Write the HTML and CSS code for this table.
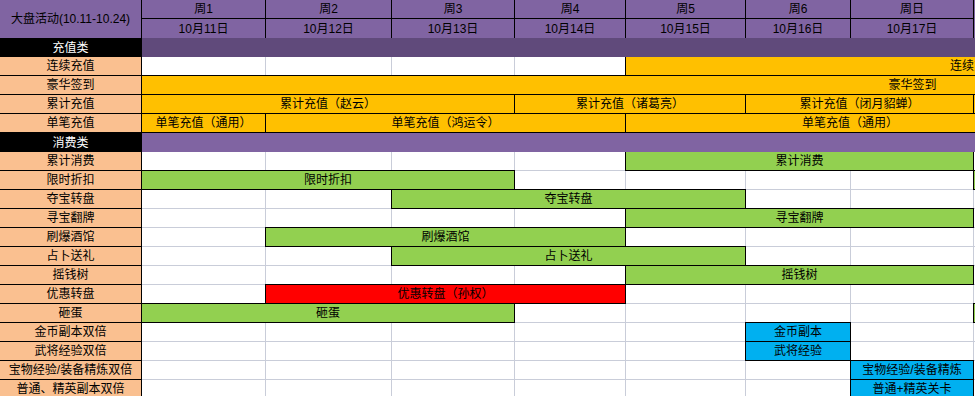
FILE: index.html
```html
<!DOCTYPE html>
<html lang="zh-CN">
<head>
<meta charset="utf-8">
<title>大盘活动</title>
<link rel="stylesheet" href="styles.css">
</head>
<body>
<div class="sheet">
  <!-- header -->
  <div class="corner">大盘活动(10.11-10.24)</div>
  <div class="hd top">周1</div>
  <div class="hd top">周2</div>
  <div class="hd top">周3</div>
  <div class="hd top">周4</div>
  <div class="hd top">周5</div>
  <div class="hd top">周6</div>
  <div class="hd top">周日</div>
  <div class="hd-rest"></div>
  <div class="hd">10月11日</div>
  <div class="hd">10月12日</div>
  <div class="hd">10月13日</div>
  <div class="hd">10月14日</div>
  <div class="hd">10月15日</div>
  <div class="hd">10月16日</div>
  <div class="hd">10月17日</div>

  <!-- 充值类 -->
  <div class="cat">充值类</div>
  <div class="cat-bar dark"></div>

  <div class="lbl">连续充值</div>
  <div class="c"></div><div class="c"></div><div class="c"></div><div class="c"></div>
  <div class="bar orange flush s6">连续充值</div>
  <div class="c"></div>

  <div class="lbl">豪华签到</div>
  <div class="bar orange s11">豪华签到</div>

  <div class="lbl">累计充值</div>
  <div class="bar orange s3">累计充值（赵云）</div>
  <div class="bar orange s2">累计充值（诸葛亮）</div>
  <div class="bar orange s2">累计充值（闭月貂蝉）</div>
  <div class="bar orange s4"></div>

  <div class="lbl">单笔充值</div>
  <div class="bar orange s1">单笔充值（通用）</div>
  <div class="bar orange s3">单笔充值（鸿运令）</div>
  <div class="bar orange s4">单笔充值（通用）</div>
  <div class="c s3"></div>

  <!-- 消费类 -->
  <div class="cat">消费类</div>
  <div class="cat-bar light"></div>

  <div class="lbl">累计消费</div>
  <div class="c"></div><div class="c"></div><div class="c"></div><div class="c"></div>
  <div class="bar green flush s3">累计消费</div>
  <div class="c s4"></div>

  <div class="lbl">限时折扣</div>
  <div class="bar green s3">限时折扣</div>
  <div class="c"></div><div class="c"></div><div class="c"></div><div class="c"></div>
  <div class="bar green s4"></div>

  <div class="lbl">夺宝转盘</div>
  <div class="c"></div><div class="c"></div>
  <div class="bar green s3">夺宝转盘</div>
  <div class="c"></div><div class="c"></div>
  <div class="c s4"></div>

  <div class="lbl">寻宝翻牌</div>
  <div class="c"></div><div class="c"></div><div class="c"></div><div class="c"></div>
  <div class="bar green s3">寻宝翻牌</div>
  <div class="c s4"></div>

  <div class="lbl">刷爆酒馆</div>
  <div class="c"></div>
  <div class="bar green s3">刷爆酒馆</div>
  <div class="c"></div><div class="c"></div><div class="c"></div>
  <div class="c s4"></div>

  <div class="lbl">占卜送礼</div>
  <div class="c"></div><div class="c"></div>
  <div class="bar green s3">占卜送礼</div>
  <div class="c"></div><div class="c"></div>
  <div class="c s4"></div>

  <div class="lbl">摇钱树</div>
  <div class="c"></div><div class="c"></div><div class="c"></div><div class="c"></div>
  <div class="bar green s3">摇钱树</div>
  <div class="c s4"></div>

  <div class="lbl">优惠转盘</div>
  <div class="c"></div>
  <div class="bar red s3">优惠转盘（孙权）</div>
  <div class="c"></div><div class="c"></div><div class="c"></div>
  <div class="c s4"></div>

  <div class="lbl">砸蛋</div>
  <div class="bar green s3">砸蛋</div>
  <div class="c"></div><div class="c"></div><div class="c"></div><div class="c"></div>
  <div class="bar green s4"></div>

  <div class="lbl">金币副本双倍</div>
  <div class="c"></div><div class="c"></div><div class="c"></div><div class="c"></div><div class="c"></div>
  <div class="bar blue s1">金币副本</div>
  <div class="c"></div>
  <div class="c s4"></div>

  <div class="lbl">武将经验双倍</div>
  <div class="c"></div><div class="c"></div><div class="c"></div><div class="c"></div><div class="c"></div>
  <div class="bar blue s1">武将经验</div>
  <div class="c"></div>
  <div class="c s4"></div>

  <div class="lbl">宝物经验/装备精炼双倍</div>
  <div class="c"></div><div class="c"></div><div class="c"></div><div class="c"></div><div class="c"></div><div class="c"></div>
  <div class="bar blue s1">宝物经验/装备精炼</div>
  <div class="c s4"></div>

  <div class="lbl">普通、精英副本双倍</div>
  <div class="c"></div><div class="c"></div><div class="c"></div><div class="c"></div><div class="c"></div><div class="c"></div>
  <div class="bar blue s1">普通+精英关卡</div>
  <div class="c s4"></div>
</div>
</body>
</html>
```

FILE: styles.css
```css
html, body {
  margin: 0;
  padding: 0;
}

body {
  width: 975px;
  height: 396px;
  overflow: hidden;
  background: #ffffff;
  font-family: "Liberation Sans", "Noto Sans CJK SC", sans-serif;
  font-size: 12px;
  color: #000000;
}

.sheet {
  display: grid;
  grid-template-columns: 142px 124px 126px 123px 111px 120px 105px 123px 101px 101px 147px 361px;
  grid-auto-rows: 19px;
  width: 1684px;
}

.sheet > div {
  box-sizing: border-box;
  display: flex;
  align-items: center;
  justify-content: center;
  white-space: nowrap;
  min-width: 0;
  line-height: 1;
}

.corner {
  grid-row: span 2;
  background: #8064a2;
  border-right: 1px solid #000;
}

.hd {
  background: #8064a2;
  border-right: 1px solid #000;
}

.hd.top {
  border-bottom: 1px solid #000;
}

.hd-rest {
  grid-column: span 4;
  grid-row: span 2;
  background: #8064a2;
}

.cat {
  background: #000000;
  color: #ffffff;
  border-right: 1px solid #000;
}

.cat-bar {
  grid-column: span 11;
}

.cat-bar.dark {
  background: #604a7b;
}

.cat-bar.light {
  background: #8064a2;
}

.lbl {
  background: #fac090;
  border-right: 1px solid #000;
  border-bottom: 1px solid #000;
}

.c {
  background: #ffffff;
  border-right: 1px solid #c9cdd9;
  border-bottom: 1px solid #c9cdd9;
}

.bar {
  border: 1px solid #000;
  margin: -1px 0 0 -1px;
}

.bar.flush {
  border-top: 0;
  margin-top: 0;
}

.orange { background: #ffc000; }
.green { background: #92d050; }
.red { background: #ff0000; }
.blue { background: #00b0f0; }

.s1 { grid-column: span 1; }
.s2 { grid-column: span 2; }
.s3 { grid-column: span 3; }
.s4 { grid-column: span 4; }
.s6 { grid-column: span 6; }
.s11 { grid-column: span 11; }
```
